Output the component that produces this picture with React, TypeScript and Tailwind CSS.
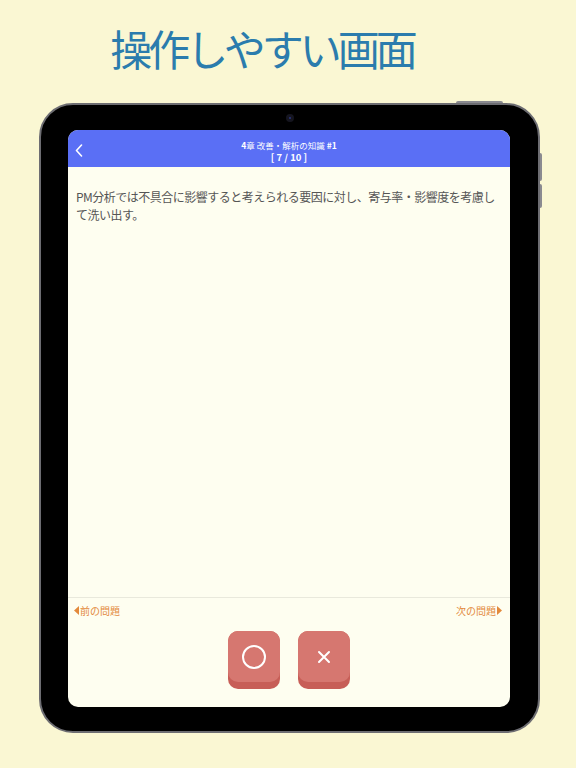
import React from "react";

export default function App() {
  return (
    <div
      className="w-[576px] h-[768px] bg-[#faf7d3] flex flex-col items-center overflow-hidden"
      style={{ fontFamily: '"Noto Sans CJK JP", "Noto Sans", sans-serif' }}
    >
      <h1 className="mt-[22px] mr-[52px] h-[52px] text-[42px] leading-[52px] text-[#2b7cad] tracking-[-4px] font-normal">
        操作しやすい画面
      </h1>
      <div className="relative mt-[29px] ml-[3px] w-[501px] h-[630px]">
        {/* top button */}
        <div className="absolute left-[417px] top-[-2px] w-[47px] h-[3px] rounded-t-[2px] bg-[#8a8a90]" />
        {/* side buttons */}
        <div className="absolute right-[-2px] top-[50px] w-[3px] h-[28px] rounded-r-[2px] bg-[#8a8a90]" />
        <div className="absolute right-[-2px] top-[81px] w-[3px] h-[24px] rounded-r-[2px] bg-[#8a8a90]" />
        <div className="relative w-full h-full rounded-[34px] bg-black border-[2px] border-[#6d6d72] pl-[27px] pr-[28px] pt-[25px] pb-[24px] flex">
          {/* camera */}
          <div className="absolute left-[245px] top-[9px] w-[8px] h-[8px] rounded-full bg-[#15151f] flex items-center justify-center">
            <div className="w-[2px] h-[2px] rounded-full bg-[#2a3580]" />
          </div>
          <div className="flex-1 rounded-[10px] overflow-hidden bg-[#fefef0] flex flex-col">
            <div className="h-[37px] bg-[#5a6ff5] relative flex flex-col items-center justify-center text-white">
              <svg
                className="absolute left-[7px] top-[14px]"
                width="8"
                height="13"
                viewBox="0 0 8 13"
                fill="none"
              >
                <path d="M6.5 1 L1.5 6.5 L6.5 12" stroke="white" strokeWidth="1.6" strokeLinecap="round" strokeLinejoin="round" />
              </svg>
              <div className="text-[8.5px] leading-[11px] mt-[5px]">
                <span className="font-bold">4</span>章 改善・解析の知識 <span className="font-bold">#1</span>
              </div>
              <div className="text-[9.5px] leading-[12px] font-bold">[ 7 / 10 ]</div>
            </div>
            <div className="flex-1 px-[8px] pt-[21px] text-[12px] tracking-[-0.5px] leading-[18px] text-[#555555]">
              PM分析では不具合に影響すると考えられる要因に対し、寄与率・影響度を考慮して洗い出す。
            </div>
            <div className="border-t border-[#e9e9dc] pt-[5px] pb-[18px] flex flex-col">
              <div className="flex justify-between items-center pl-[6px] pr-[8px] h-[14px] text-[10px] text-[#e3893b]">
                <div className="flex items-center">
                  <svg width="5" height="9" viewBox="0 0 5 9" className="mr-[1px]">
                    <path d="M5 0 L0 4.5 L5 9 Z" fill="#e3893b" />
                  </svg>
                  <span>前の問題</span>
                </div>
                <div className="flex items-center">
                  <span>次の問題</span>
                  <svg width="5" height="9" viewBox="0 0 5 9" className="ml-[1px]">
                    <path d="M0 0 L5 4.5 L0 9 Z" fill="#e3893b" />
                  </svg>
                </div>
              </div>
              <div className="mt-[14px] flex justify-center gap-[18px]">
                <div className="w-[52px] h-[58px] rounded-[10px] bg-[#c75e57] pb-[7px] flex">
                  <div className="flex-1 rounded-[10px] bg-[#d67770] flex items-center justify-center">
                    <svg width="26" height="26" viewBox="0 0 26 26">
                      <circle cx="13" cy="13" r="11" stroke="white" strokeWidth="2" fill="none" />
                    </svg>
                  </div>
                </div>
                <div className="w-[52px] h-[58px] rounded-[10px] bg-[#c75e57] pb-[7px] flex">
                  <div className="flex-1 rounded-[10px] bg-[#d67770] flex items-center justify-center">
                    <svg width="14" height="14" viewBox="0 0 14 14">
                      <path d="M2 2 L12 12 M12 2 L2 12" stroke="white" strokeWidth="2" strokeLinecap="round" />
                    </svg>
                  </div>
                </div>
              </div>
            </div>
          </div>
        </div>
      </div>
    </div>
  );
}
